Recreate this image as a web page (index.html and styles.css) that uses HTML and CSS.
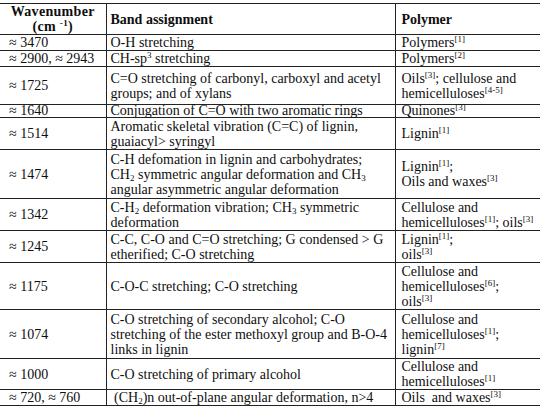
FILE: index.html
```html
<!DOCTYPE html>
<html>
<head>
<meta charset="utf-8">
<link rel="stylesheet" href="styles.css">
</head>
<body>
<table class="ftir">
  <colgroup>
    <col class="c-wave">
    <col class="c-band">
    <col class="c-poly">
  </colgroup>
  <thead>
    <tr class="h31">
      <th class="wave-h">Wavenumber<br>(cm <sup>-1</sup>)</th>
      <th class="band">Band assignment</th>
      <th class="poly">Polymer</th>
    </tr>
  </thead>
  <tbody>
    <tr class="h16">
      <td class="wave">≈ 3470</td>
      <td class="band">O-H stretching</td>
      <td class="poly">Polymers<sup>[1]</sup></td>
    </tr>
    <tr class="h16">
      <td class="wave">≈ 2900, ≈ 2943</td>
      <td class="band">CH-sp<sup>3</sup> stretching</td>
      <td class="poly">Polymers<sup>[2]</sup></td>
    </tr>
    <tr class="h38">
      <td class="wave">≈ 1725</td>
      <td class="band">C=O stretching of carbonyl, carboxyl and acetyl<br>groups; and of xylans</td>
      <td class="poly">Oils<sup>[3]</sup>; cellulose and<br>hemicelluloses<sup>[4-5]</sup></td>
    </tr>
    <tr class="h12">
      <td class="wave">≈ 1640</td>
      <td class="band">Conjugation of C=O with two aromatic rings</td>
      <td class="poly">Quinones<sup>[3]</sup></td>
    </tr>
    <tr class="h32">
      <td class="wave">≈ 1514</td>
      <td class="band">Aromatic skeletal vibration (C=C) of lignin,<br>guaiacyl&gt; syringyl</td>
      <td class="poly">Lignin<sup>[1]</sup></td>
    </tr>
    <tr class="h49">
      <td class="wave">≈ 1474</td>
      <td class="band">C-H defomation in lignin and carbohydrates;<br>CH<sub>2</sub> symmetric angular deformation and CH<sub>3</sub><br>angular asymmetric angular deformation</td>
      <td class="poly">Lignin<sup>[1]</sup>;<br>Oils and waxes<sup>[3]</sup></td>
    </tr>
    <tr class="h32">
      <td class="wave">≈ 1342</td>
      <td class="band">C-H<sub>2</sub> deformation vibration; CH<sub>3</sub> symmetric<br>deformation</td>
      <td class="poly">Cellulose and<br>hemicelluloses<sup>[1]</sup>; oils<sup>[3]</sup></td>
    </tr>
    <tr class="h32">
      <td class="wave">≈ 1245</td>
      <td class="band">C-C, C-O and C=O stretching; G condensed &gt; G<br>etherified; C-O stretching</td>
      <td class="poly">Lignin<sup>[1]</sup>;<br>oils<sup>[3]</sup></td>
    </tr>
    <tr class="h47">
      <td class="wave">≈ 1175</td>
      <td class="band">C-O-C stretching; C-O stretching</td>
      <td class="poly">Cellulose and<br>hemicelluloses<sup>[6]</sup>;<br>oils<sup>[3]</sup></td>
    </tr>
    <tr class="h49">
      <td class="wave">≈ 1074</td>
      <td class="band">C-O stretching of secondary alcohol; C-O<br>stretching of the ester methoxyl group and B-O-4<br>links in lignin</td>
      <td class="poly">Cellulose and<br>hemicelluloses<sup>[1]</sup>;<br>lignin<sup>[7]</sup></td>
    </tr>
    <tr class="h31">
      <td class="wave">≈ 1000</td>
      <td class="band">C-O stretching of primary alcohol</td>
      <td class="poly">Cellulose and<br>hemicelluloses<sup>[1]</sup></td>
    </tr>
    <tr class="h16">
      <td class="wave">≈ 720, ≈ 760</td>
      <td class="band">&nbsp;(CH<sub>2</sub>)n out-of-plane angular deformation, n&gt;4</td>
      <td class="poly">Oils&nbsp; and waxes<sup>[3]</sup></td>
    </tr>
  </tbody>
</table>
</body>
</html>
```

FILE: styles.css
```css
html, body {
  margin: 0;
  padding: 0;
  background: #ffffff;
}

body {
  padding-top: 3px;
  font-family: "Times New Roman", "Liberation Serif", Tinos, "DejaVu Serif", serif;
  font-size: 14px;
  color: #0e0e0e;
}

.ftir {
  border-collapse: collapse;
  table-layout: fixed;
  width: 540px;
  border-top: 1px solid #222;
  border-bottom: 1px solid #222;
}

.c-wave { width: 106px; }
.c-band { width: 289px; }
.c-poly { width: 145px; }

.ftir th,
.ftir td {
  padding: 0;
  line-height: 15px;
  vertical-align: middle;
  text-align: left;
  white-space: nowrap;
  border-top: 1px solid #222;
  border-bottom: 1px solid #222;
}

.ftir th {
  font-weight: bold;
}

.ftir .band,
.ftir .poly {
  border-left: 1px solid #222;
}

.ftir .wave-h {
  text-align: center;
  line-height: 15px;
  letter-spacing: 0.3px;
}

.ftir .wave {
  padding-left: 9px;
}

.ftir .band {
  padding-left: 4px;
}

.ftir .poly {
  padding-left: 6px;
}

.ftir sup {
  font-size: 9px;
  line-height: 0;
  vertical-align: 5px;
}

.ftir sub {
  font-size: 9px;
  line-height: 0;
  vertical-align: -2px;
}

.ftir .h31 > * { height: 29px; }
.ftir .h16 > * { height: 15px; }
.ftir .h38 > * { height: 37px; }
.ftir .h12 > * { height: 12px; line-height: 12px; }
.ftir .h32 > * { height: 31px; }
.ftir .h49 > * { height: 48px; }
.ftir .h47 > * { height: 46px; }
```
